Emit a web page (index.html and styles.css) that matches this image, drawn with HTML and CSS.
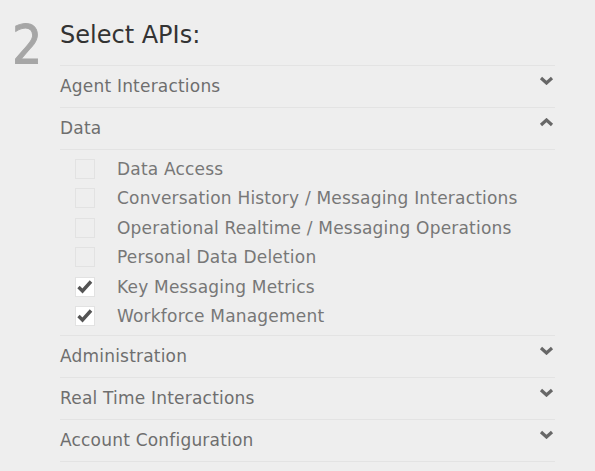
FILE: index.html
```html
<!DOCTYPE html>
<html lang="en">
<head>
<meta charset="UTF-8">
<meta name="viewport" content="width=device-width, initial-scale=1.0">
<title>Select APIs</title>
<link rel="stylesheet" href="styles.css">
</head>
<body>
<section class="step">
  <div class="step-num">2</div>
  <div class="step-body">
    <h2 class="step-title">Select APIs:</h2>
    <ul class="api-groups">
      <li class="group">
        <div class="group-head">
          <span>Agent Interactions</span>
          <svg class="chev" width="15" height="9" viewBox="0 0 15 9"><path d="M2 2 L7.5 7 L13 2"/></svg>
        </div>
      </li>
      <li class="group open">
        <div class="group-head">
          <span>Data</span>
          <svg class="chev" width="15" height="9" viewBox="0 0 15 9"><path d="M2 7 L7.5 2 L13 7"/></svg>
        </div>
        <ul class="api-list">
          <li><span class="box"></span>Data Access</li>
          <li><span class="box"></span>Conversation History / Messaging Interactions</li>
          <li><span class="box"></span>Operational Realtime / Messaging Operations</li>
          <li><span class="box"></span>Personal Data Deletion</li>
          <li><span class="box checked"><svg width="18" height="18" viewBox="0 0 18 18"><path d="M2.5 9 L6.5 13 L15 3.5"/></svg></span>Key Messaging Metrics</li>
          <li><span class="box checked"><svg width="18" height="18" viewBox="0 0 18 18"><path d="M2.5 9 L6.5 13 L15 3.5"/></svg></span>Workforce Management</li>
        </ul>
      </li>
      <li class="group">
        <div class="group-head">
          <span>Administration</span>
          <svg class="chev" width="15" height="9" viewBox="0 0 15 9"><path d="M2 2 L7.5 7 L13 2"/></svg>
        </div>
      </li>
      <li class="group">
        <div class="group-head">
          <span>Real Time Interactions</span>
          <svg class="chev" width="15" height="9" viewBox="0 0 15 9"><path d="M2 2 L7.5 7 L13 2"/></svg>
        </div>
      </li>
      <li class="group">
        <div class="group-head">
          <span>Account Configuration</span>
          <svg class="chev" width="15" height="9" viewBox="0 0 15 9"><path d="M2 2 L7.5 7 L13 2"/></svg>
        </div>
      </li>
    </ul>
  </div>
</section>
</body>
</html>
```

FILE: styles.css
```css
body, html {
  margin: 0;
  padding: 0;
  background-color: #eeeeee;
  font-family: 'DejaVu Sans', sans-serif;
}

.step {
  display: flex;
  padding-left: 12px;
}

.step-num {
  width: 48px;
  font-family: 'DejaVu Sans Condensed', 'DejaVu Sans', sans-serif;
  font-size: 53px;
  line-height: 1;
  color: #a6a6a6;
  -webkit-text-stroke: 0.9px #a6a6a6;
  padding-top: 18px;
}

.step-body {
  width: 495px;
}

.step-title {
  margin: 0;
  height: 66px;
  box-sizing: border-box;
  padding-top: 20px;
  font-size: 24px;
  line-height: 30px;
  font-weight: normal;
  color: #333;
  border-bottom: 1px solid #e3e3e3;
}

.api-groups, .api-list {
  list-style: none;
  margin: 0;
  padding: 0;
}

.group {
  border-bottom: 1px solid #e3e3e3;
}

.group-head {
  display: flex;
  justify-content: space-between;
  height: 41px;
  line-height: 41px;
  font-size: 17px;
  letter-spacing: 0.2px;
  color: #6e6e6e;
}

.chev {
  margin-top: 10px;
  margin-right: 1px;
  fill: none;
  stroke: #676767;
  stroke-width: 3.2;
}

.api-list {
  padding: 4px 0 4px 15px;
  border-top: 1px solid #e3e3e3;
}

.api-list li {
  display: flex;
  align-items: center;
  height: 29.5px;
  font-size: 17px;
  letter-spacing: 0.2px;
  color: #777;
}

.box {
  display: flex;
  width: 18px;
  height: 18px;
  border: 1px solid #e2e2e2;
  margin-right: 22px;
}

.box.checked {
  background-color: #fff;
}

.box svg {
  fill: none;
  stroke: #545454;
  stroke-width: 3.4;
}
```
